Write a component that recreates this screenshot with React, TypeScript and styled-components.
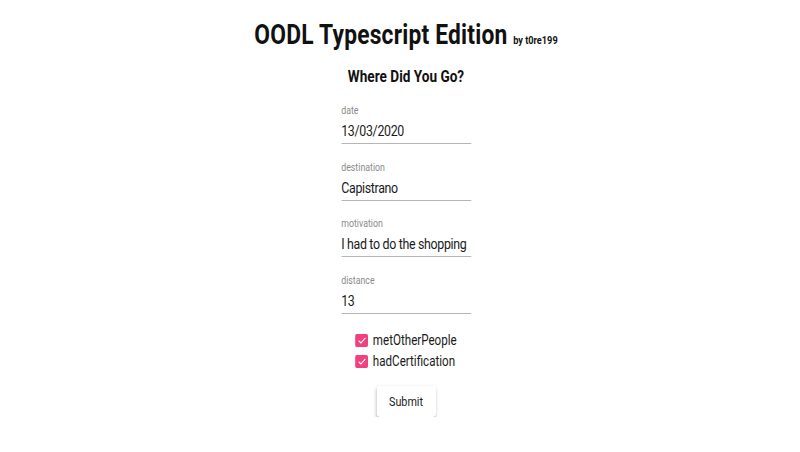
import React from "react";
import styled, { createGlobalStyle } from "styled-components";

const Global = createGlobalStyle`
  html, body { margin: 0; padding: 0; background: #ffffff; overflow: hidden; }
  body { font-family: Roboto, "Liberation Sans", Arial, sans-serif; color: #111; }
`;

/* The reference capture is squeezed horizontally; render at 1000px and scale to 800px. */
const Stage = styled.div`
  width: 1000px;
  transform: scaleX(0.8);
  transform-origin: 0 0;
`;

const Page = styled.div`
  display: flex;
  flex-direction: column;
  align-items: center;
  padding: 19px 0 0 15px;
`;

const Title = styled.h1`
  margin: 0;
  font-size: 28.5px;
  line-height: 32px;
  font-weight: 700;
  letter-spacing: 0.25px;
  color: #111;
  white-space: nowrap;
`;

const Byline = styled.span`
  font-size: 11.5px;
  line-height: 1;
  font-weight: 700;
  letter-spacing: 0;
  margin-left: 7px;
`;

const Subtitle = styled.h2`
  margin: 15px 0 0;
  font-size: 17px;
  line-height: 20px;
  font-weight: 700;
  color: #111;
`;

const Form = styled.form`
  display: flex;
  flex-direction: column;
  align-items: center;
  margin-top: 19px;
`;

const Fields = styled.div`
  display: flex;
  flex-direction: column;
  gap: 17.5px;
  width: 162px;
`;

const Field = styled.label`
  display: flex;
  flex-direction: column;
`;

const Label = styled.span`
  font-size: 11px;
  line-height: 12px;
  color: #8a8a8a;
  margin-bottom: 5px;
`;

const Value = styled.span`
  font-size: 15.5px;
  line-height: 18px;
  letter-spacing: -0.4px;
  color: #1a1a1a;
  padding-bottom: 3px;
  border-bottom: 1px solid #b5b5b5;
  white-space: nowrap;
`;

const Checks = styled.div`
  display: flex;
  flex-direction: column;
  gap: 8px;
  margin-top: 20px;
`;

const CheckRow = styled.div`
  display: flex;
  align-items: center;
  gap: 6px;
`;

const Box = styled.span`
  width: 16px;
  height: 13px;
  border-radius: 2px;
  background: #f2407c;
  display: flex;
  align-items: center;
  justify-content: center;
`;

const CheckLabel = styled.span`
  font-size: 14.5px;
  line-height: 13px;
  color: #1a1a1a;
`;

const Button = styled.button`
  margin-top: 18px;
  width: 74px;
  height: 31px;
  border: none;
  border-radius: 4px;
  background: #ffffff;
  font-family: Roboto, "Liberation Sans", Arial, sans-serif;
  font-size: 13.5px;
  font-weight: 400;
  color: #1e1e1e;
  box-shadow: 0px 3px 1px -2px rgba(0,0,0,.2), 0px 2px 2px 0px rgba(0,0,0,.14), 0px 1px 5px 0px rgba(0,0,0,.12);
  padding: 0;
`;

const Tick = () => (
  <svg width="13" height="11" viewBox="0 0 28 24" preserveAspectRatio="none">
    <path d="M5 12.5l6 5L23 6.5" fill="none" stroke="#fff" strokeWidth="2.6" />
  </svg>
);

const fields = [
  { label: "date", value: "13/03/2020" },
  { label: "destination", value: "Capistrano" },
  { label: "motivation", value: "I had to do the shopping" },
  { label: "distance", value: "13" },
];

const checks = ["metOtherPeople", "hadCertification"];

export default function App() {
  return (
    <Stage>
      <Global />
      <Page>
        <Title>
          OODL Typescript Edition<Byline>by t0re199</Byline>
        </Title>
        <Subtitle>Where Did You Go?</Subtitle>
        <Form onSubmit={(e) => e.preventDefault()}>
          <Fields>
            {fields.map((f) => (
              <Field key={f.label}>
                <Label>{f.label}</Label>
                <Value>{f.value}</Value>
              </Field>
            ))}
          </Fields>
          <Checks>
            {checks.map((c) => (
              <CheckRow key={c}>
                <Box>
                  <Tick />
                </Box>
                <CheckLabel>{c}</CheckLabel>
              </CheckRow>
            ))}
          </Checks>
          <Button type="submit">Submit</Button>
        </Form>
      </Page>
    </Stage>
  );
}
